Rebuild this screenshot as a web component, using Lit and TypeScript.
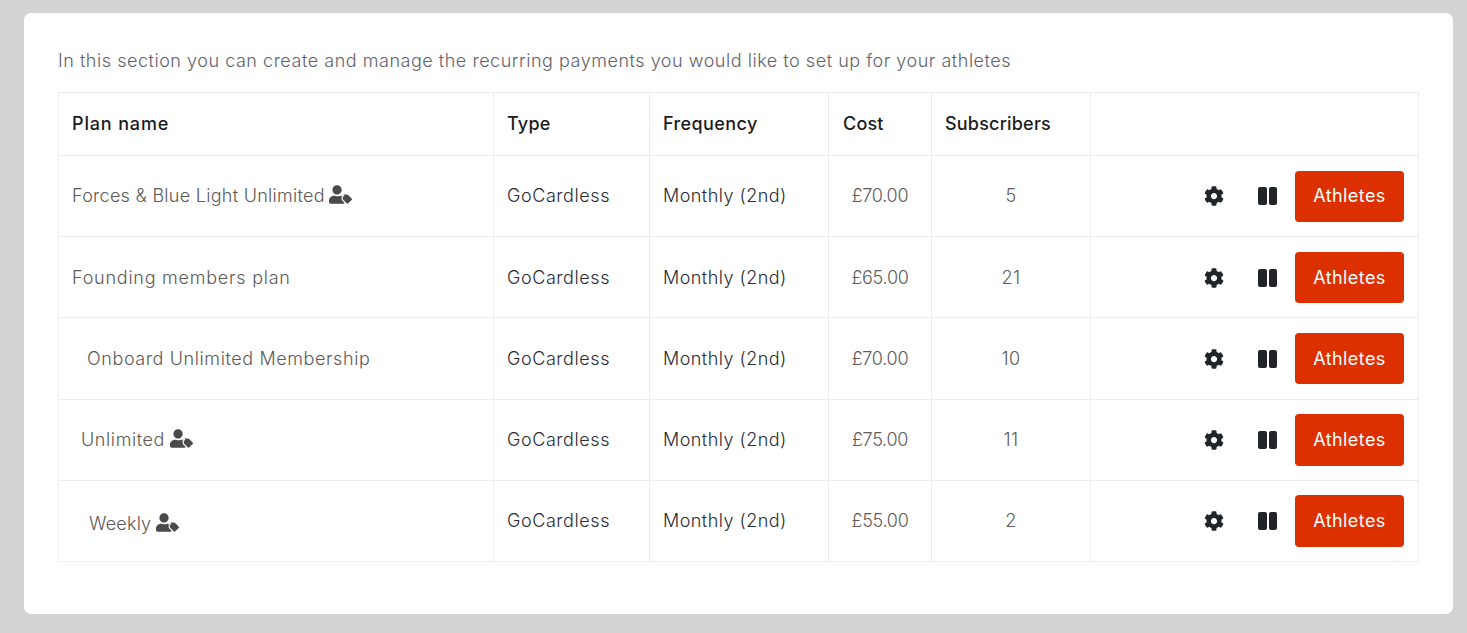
import { LitElement, html, css, svg } from "lit";
import { customElement } from "lit/decorators.js";

const cog = svg`<path d="M487.4 315.7l-42.6-24.6c4.3-23.2 4.3-47 0-70.2l42.6-24.6c4.9-2.8 7.1-8.6 5.5-14-11.1-35.6-30-67.8-54.7-94.6-3.8-4.1-10-5.1-14.8-2.3L380.8 110c-17.9-15.4-38.5-27.3-60.8-35.1V25.8c0-5.6-3.9-10.5-9.4-11.7-36.7-8.2-74.3-7.8-109.2 0-5.5 1.2-9.4 6.1-9.4 11.7V75c-22.2 7.9-42.8 19.8-60.8 35.1L88.7 85.5c-4.9-2.8-11-1.9-14.8 2.3-24.7 26.7-43.6 58.9-54.7 94.6-1.7 5.4.6 11.2 5.5 14L67.3 221c-4.3 23.2-4.3 47 0 70.2l-42.6 24.6c-4.9 2.8-7.1 8.6-5.5 14 11.1 35.6 30 67.8 54.7 94.6 3.8 4.1 10 5.1 14.8 2.3l42.6-24.6c17.9 15.4 38.5 27.3 60.8 35.1v49.2c0 5.6 3.9 10.5 9.4 11.7 36.7 8.2 74.3 7.8 109.2 0 5.5-1.2 9.4-6.1 9.4-11.7v-49.2c22.2-7.9 42.8-19.8 60.8-35.1l42.6 24.6c4.9 2.8 11 1.9 14.8-2.3 24.7-26.7 43.6-58.9 54.7-94.6 1.5-5.5-.7-11.3-5.6-14.1zM256 336c-44.1 0-80-35.9-80-80s35.9-80 80-80 80 35.9 80 80-35.9 80-80 80z"/>`;
const userTag = svg`<path d="M630.6 364.9l-90.3-90.2c-12-12-28.3-18.7-45.3-18.7h-79.3c-17.7 0-32 14.3-32 32v79.2c0 17 6.7 33.2 18.7 45.2l90.3 90.2c12.5 12.5 32.8 12.5 45.2 0l92.5-92.5c12.6-12.6 12.6-32.8 0-45.2zm-229.5-51.3c-13.3 0-24-10.7-24-24s10.7-24 24-24 24 10.7 24 24-10.7 24-24 24zM224 256c70.7 0 128-57.3 128-128S294.7 0 224 0 96 57.3 96 128s57.3 128 128 128zm127.8 111.2V288c-10.3-.9-16 0-22 0h-16.700c-22.200 10.200-46.900 16-72.900 16s-50.600-5.800-72.900-16h-16.700C60.200 288 0 348.200 0 422.400V464c0 26.500 21.500 48 48 48h352c15.500 0 29.100-7.400 37.900-18.800l-68.100-68.100c-11.600-11.600-18-27-18-43.900z"/>`;

type Row = { name: string; cls: string; tag: boolean; cost: string; subs: string };
const rows: Row[] = [
  { name: "Forces & Blue Light Unlimited", cls: "r1", tag: true, cost: "£70.00", subs: "5" },
  { name: "Founding members plan", cls: "r2", tag: false, cost: "£65.00", subs: "21" },
  { name: "Onboard Unlimited Membership", cls: "r3", tag: false, cost: "£70.00", subs: "10" },
  { name: "Unlimited", cls: "r4", tag: true, cost: "£75.00", subs: "11" },
  { name: "Weekly", cls: "r5", tag: true, cost: "£55.00", subs: "2" },
];

@customElement("app-root")
export class AppRoot extends LitElement {
  static styles = css`
    :host {
      display: block;
      box-sizing: border-box;
      min-height: 100vh;
      padding: 13px 14px 19px 24px;
      background: #d3d3d3;
      font-family: Inter, "Liberation Sans", sans-serif;
      font-size: 18px;
      font-weight: 300;
      color: #5c5c5c;
    }
    .card {
      box-sizing: border-box;
      height: 601px;
      padding: 34px 34px 0;
      background: #fff;
      border-radius: 7px;
    }
    .intro {
      margin: 0 0 19px;
      height: 26px;
      line-height: 27px;
      color: #62626c;
      letter-spacing: 0.53px;
      white-space: nowrap;
    }
    table {
      width: 1361px;
      table-layout: fixed;
      border-collapse: collapse;
    }
    th, td {
      border: 1px solid #ededed;
      padding: 0 13px 0.4px;
      vertical-align: middle;
      white-space: nowrap;
    }
    th {
      height: 60px;
      padding-bottom: 2px;
      text-align: left;
      font-weight: 500;
      color: #1c1c1e;
      letter-spacing: 0.2px;
    }
    th.plan { letter-spacing: 0.85px; }
    th.freq { letter-spacing: 0.4px; }
    th.cost-h { padding-left: 14px; }
    td { height: 79.8px; letter-spacing: 0.38px; }
    .name { color: #5e5a58; }
    .r1 { letter-spacing: 0.28px; }
    .r2 { letter-spacing: 0.76px; }
    .r3 { letter-spacing: 0.6px; padding-left: 28px; }
    .r4 { letter-spacing: 0.6px; padding-left: 22px; }
    .r5 { letter-spacing: 0.2px; padding-left: 30px; }
    .r5 span { position: relative; top: 3px; }
    .tag {
      width: 23px;
      height: 19px;
      margin-left: -1px;
      vertical-align: -2px;
      fill: #4a4a4a;
    }
    .gc { color: #2b2c34; letter-spacing: 0.58px; }
    .freq-v { color: #2b2c34; letter-spacing: 0.46px; }
    .center { text-align: center; }
    .cost { letter-spacing: -0.28px; }
    td.actions-cell { padding: 0.5px 14px 0; height: 79.7px; }
    .actions {
      display: flex;
      align-items: center;
      justify-content: flex-end;
    }
    .cog { width: 20px; height: 20px; fill: #212529; margin-right: 34px; }
    .pause { display: flex; gap: 2px; margin-right: 18px; }
    .pause span {
      width: 8.5px;
      height: 18px;
      border-radius: 2px;
      background: #212529;
    }
    .btn {
      box-sizing: border-box;
      width: 109px;
      height: 51.4px;
      border: 0;
      border-radius: 4px;
      background: #dd3000;
      color: #fff;
      font: 400 18px Inter, "Liberation Sans", sans-serif;
      letter-spacing: 0.4px;
      padding: 0 0 1px;
    }
  `;

  render() {
    return html`
      <div class="card">
        <p class="intro">In this section you can create and manage the recurring payments you would like to set up for your athletes</p>
        <table>
          <colgroup>
            <col style="width:435px" /><col style="width:156px" /><col style="width:179px" />
            <col style="width:103px" /><col style="width:159px" /><col />
          </colgroup>
          <thead>
            <tr><th class="plan">Plan name</th><th>Type</th><th class="freq">Frequency</th><th class="cost-h">Cost</th><th>Subscribers</th><th></th></tr>
          </thead>
          <tbody>
            ${rows.map(
              (r) => html`<tr>
                <td class="name ${r.cls}">
                  <span>${r.name}
                    ${r.tag ? html`<svg class="tag" viewBox="0 0 640 512">${userTag}</svg>` : ""}</span>
                </td>
                <td class="gc">GoCardless</td>
                <td class="freq-v">Monthly (2nd)</td>
                <td class="center cost">${r.cost}</td>
                <td class="center">${r.subs}</td>
                <td class="actions-cell">
                  <div class="actions">
                    <svg class="cog" viewBox="0 0 512 512">${cog}</svg>
                    <div class="pause"><span></span><span></span></div>
                    <button class="btn">Athletes</button>
                  </div>
                </td>
              </tr>`
            )}
          </tbody>
        </table>
      </div>
    `;
  }
}
